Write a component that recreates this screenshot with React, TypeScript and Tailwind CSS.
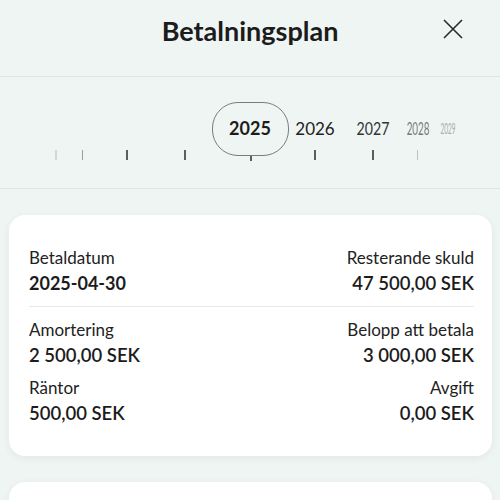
const CX = 250;
const R = 200;
const STEP = (19 * Math.PI) / 180;

const pos = (i: number) => CX + R * Math.sin(i * STEP);
const squash = (i: number) => Math.cos(i * STEP);

const years = [
  { label: '2025', i: 0, x: pos(0), sx: 1, sy: 1, color: '#1c1c1c' },
  { label: '2026', i: 1, x: pos(1), sx: squash(1), sy: 1, color: '#222222' },
  { label: '2027', i: 2, x: pos(2), sx: squash(2), sy: 1, color: '#333333' },
  { label: '2028', i: 3, x: pos(3), sx: squash(3), sy: 0.95, color: '#7a7a7a' },
  { label: '2029', i: 4, x: 448, sx: 0.36, sy: 0.85, color: '#acacac' },
];

const ticks = [
  { i: -4, color: '#d2d6d4' },
  { i: -3, color: '#9a9d9b' },
  { i: -2, color: '#5c5e5d' },
  { i: -1, color: '#5c5e5d' },
  { i: 1, color: '#5c5e5d' },
  { i: 2, color: '#5c5e5d' },
  { i: 3, color: '#bfc3c1' },
];

const rows = [
  {
    left: { label: 'Betaldatum', value: '2025-04-30', bold: true },
    right: { label: 'Resterande skuld', value: '47 500,00 SEK' },
  },
  {
    left: { label: 'Amortering', value: '2 500,00 SEK' },
    right: { label: 'Belopp att betala', value: '3 000,00 SEK' },
  },
  {
    left: { label: 'Räntor', value: '500,00 SEK' },
    right: { label: 'Avgift', value: '0,00 SEK' },
  },
];

const Field = ({
  label,
  value,
  bold,
  right,
}: {
  label: string;
  value: string;
  bold?: boolean;
  right?: boolean;
}) => (
  <div className={right ? 'flex flex-col items-end text-right' : 'flex flex-col'}>
    <span className="text-[17px] leading-[20px] text-[#222]">{label}</span>
    <span
      className={
        bold
          ? 'mt-[4px] text-[18px] leading-[22px] font-bold text-[#1c1c1c]'
          : 'mt-[4px] text-[18.5px] leading-[22px] font-semibold text-[#1c1c1c]'
      }
    >
      {value}
    </span>
  </div>
);

const YearWheel = () => (
  <div className="relative h-[112px] border-b border-[#e1e8e4] overflow-hidden">
    {ticks.map((t) => (
      <div
        key={t.i}
        className="absolute top-[73px] h-[10px] w-[1.5px]"
        style={{ left: pos(t.i) - 0.75, backgroundColor: t.color }}
      />
    ))}
    <div className="absolute top-[79px] left-[250px] h-[5px] w-[1.5px] bg-[#5c5e5d]" />
    <div className="absolute left-[212px] top-[25px] h-[54px] w-[77px] rounded-[26px] border-[1.5px] border-[#7c7c7c]" />
    {years.map((y) => (
      <span
        key={y.label}
        className={
          y.i === 0
            ? 'absolute top-[40px] text-[18px] leading-[22px] font-bold whitespace-nowrap'
            : 'absolute top-[40px] text-[18px] leading-[22px] whitespace-nowrap'
        }
        style={{
          left: y.x,
          color: y.color,
          transform: `translateX(-50%) scaleX(${y.sx}) scaleY(${y.sy})`,
        }}
      >
        {y.label}
      </span>
    ))}
  </div>
);

export default function App() {
  return (
    <div
      className="w-[500px] h-[500px] overflow-hidden bg-[#eff5f2]"
      style={{ fontFamily: 'Lato, "Noto Sans", sans-serif' }}
    >
      <header className="relative h-[77px] border-b border-[#e1e8e4] flex justify-center pt-[15px]">
        <h1 className="text-[27px] leading-[31px] font-bold text-[#1c1c1c]">Betalningsplan</h1>
        <button className="absolute right-[37px] top-[19px] w-[20px] h-[20px]">
          <svg viewBox="0 0 20 20" width="20" height="20" fill="none" stroke="#2a2a2a" strokeWidth="1.6">
            <path d="M1 1 19 19M19 1 1 19" />
          </svg>
        </button>
      </header>

      <YearWheel />

      <div className="pt-[26px] pl-[9px] pr-[8px] flex flex-col gap-[26px]">
        <div className="bg-white rounded-2xl shadow-[0_2px_8px_rgba(0,0,0,0.06)] pl-5 pr-[18px] pt-[33px] pb-[32px]">
          {rows.map((r, idx) => (
            <div key={idx}>
              <div className="flex justify-between">
                <Field label={r.left.label} value={r.left.value} bold={r.left.bold} />
                <Field label={r.right.label} value={r.right.value} right />
              </div>
              {idx === 0 && <div className="h-px bg-[#e6e9e8] mt-[12px] mb-[13px]" />}
              {idx === 1 && <div className="h-[12px]" />}
            </div>
          ))}
        </div>
        <div className="bg-white rounded-2xl shadow-[0_2px_8px_rgba(0,0,0,0.06)] h-[120px]" />
      </div>
    </div>
  );
}
